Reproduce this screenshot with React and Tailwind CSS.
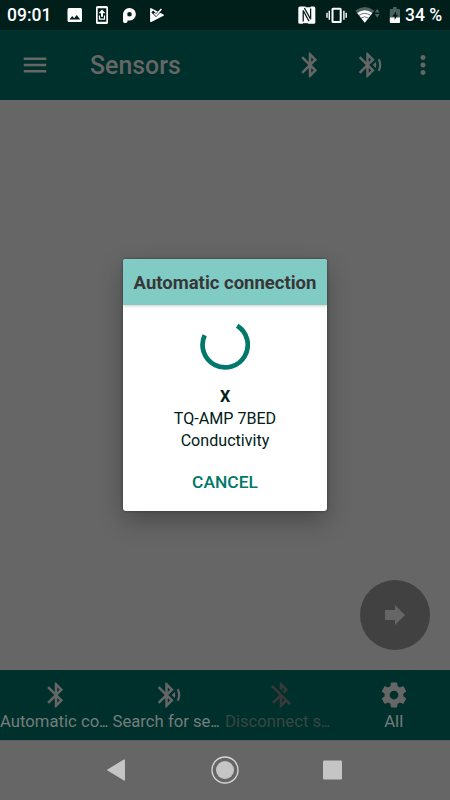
const BT =
  'M17.71 7.71L12 2h-1v7.59L6.41 5 5 6.41 10.59 12 5 17.59 6.41 19 11 14.41V22h1l5.71-5.71-4.3-4.29 4.3-4.29zM13 5.83l1.88 1.88L13 9.59V5.83zm1.88 10.46L13 18.17v-3.76l1.88 1.88z';
const BT_SEARCH =
  'M14.24 12.01l2.32 2.32c.28-.72.44-1.51.44-2.33 0-.82-.16-1.59-.43-2.31l-2.33 2.32zm5.29-5.3l-1.26 1.26c.63 1.21.98 2.57.98 4.02s-.36 2.82-.98 4.02l1.2 1.2c.97-1.54 1.54-3.36 1.54-5.31-.01-1.89-.55-3.67-1.48-5.19zm-3.82 1L10 2H9v7.59L4.41 5 3 6.41 8.59 12 3 17.59 4.41 19 9 14.41V22h1l5.71-5.71-4.3-4.29 4.3-4.29zM11 5.83l1.88 1.88L11 9.59V5.83zm1.88 10.46L11 18.17v-3.76l1.88 1.88z';
const BT_OFF =
  'M13 5.83l1.88 1.88-1.6 1.6 1.41 1.41 3.02-3.02L12 2h-1v5.03l2 2v-3.2zM5.41 4L4 5.41 10.59 12 5 17.59 6.41 19 11 14.41V22h1l4.29-4.29 2.3 2.29L20 18.59 5.41 4zM13 18.17v-3.76l1.88 1.88L13 18.17z';
const GEAR =
  'M19.43 12.98c.04-.32.07-.64.07-.98s-.03-.66-.07-.98l2.11-1.65c.19-.15.24-.42.12-.64l-2-3.46c-.12-.22-.39-.3-.61-.22l-2.49 1c-.52-.4-1.08-.73-1.69-.98l-.38-2.65C14.46 2.18 14.25 2 14 2h-4c-.25 0-.46.18-.49.42l-.38 2.65c-.61.25-1.17.59-1.69.98l-2.49-1c-.23-.09-.49 0-.61.22l-2 3.46c-.13.22-.07.49.12.64l2.11 1.65c-.04.32-.07.65-.07.98s.03.66.07.98l-2.11 1.65c-.19.15-.24.42-.12.64l2 3.46c.12.22.39.3.61.22l2.49-1c.52.4 1.08.73 1.69.98l.38 2.65c.03.24.24.42.49.42h4c.25 0 .46-.18.49-.42l.38-2.65c.61-.25 1.17-.59 1.69-.98l2.49 1c.23.09.49 0 .61-.22l2-3.46c.12-.22.07-.49-.12-.64l-2.11-1.65zM12 15.5c-1.93 0-3.5-1.57-3.5-3.5s1.57-3.5 3.5-3.5 3.5 1.57 3.5 3.5-1.57 3.5-3.5 3.5z';
const MENU = 'M3 18h18v-2H3v2zm0-5h18v-2H3v2zm0-7v2h18V6H3z';
const MORE =
  'M12 8c1.1 0 2-.9 2-2s-.9-2-2-2-2 .9-2 2 .9 2 2 2zm0 2c-1.1 0-2 .9-2 2s.9 2 2 2 2-.9 2-2-.9-2-2-2zm0 6c-1.1 0-2 .9-2 2s.9 2 2 2 2-.9 2-2-.9-2-2-2z';

function Icon({ d, className = '' }) {
  return (
    <svg viewBox="0 0 24 24" className={`size-[30px] shrink-0 ${className}`} fill="currentColor">
      <path d={d} />
    </svg>
  );
}

function StatusBar() {
  return (
    <header className="flex h-[30px] items-center bg-[#001e1a] pl-[7px] pr-2 text-white">
      <span className="w-[60px] text-[17.5px] font-medium leading-[32px]">09:01</span>
      <svg className="h-[30px] w-[100px]" viewBox="67 0 100 30" fill="currentColor">
        <path
          fillRule="evenodd"
          d="M69 8h11.5a1.5 1.5 0 0 1 1.5 1.5v11a1.5 1.5 0 0 1-1.5 1.5H69a1.5 1.5 0 0 1-1.5-1.5v-11A1.5 1.5 0 0 1 69 8zM69.5 19.5h10.7l-3.5-4.6-2.6 3.3-1.9-2.2z"
        />
        <path
          fillRule="evenodd"
          d="M97.5 6h9a1.5 1.5 0 0 1 1.500 1.500v15a1.500 1.500 0 0 1-1.500 1.500h-9a1.500 1.500 0 0 1-1.500-1.500v-15A1.500 1.500 0 0 1 97.500 6zM97.700 8.300v13.400h8.600V8.300z"
        />
        <path d="M102 9.600l3.500 3.700h-2.500v3.500h-2v-3.500h-2.500z" />
        <path d="M99.500 15.500v3.700h5v-3.700" fill="none" stroke="currentColor" strokeWidth="1.200" />
        <path
          fillRule="evenodd"
          d="M123 14.500a6.300 6.300 0 0 1 6.300-6.500 6.200 6.200 0 1 1 .6 12.500H127.500v.7a1.700 1.700 0 0 1-1.700 1.700h-1.100a1.700 1.700 0 0 1-1.700-1.700zM129.500 12a2.300 2.300 0 1 0 0 4.600 2.300 2.300 0 0 0 0-4.600z"
        />
        <path d="M151.300 8.200l12.200 6.200a.8.800 0 0 1 0 1.400l-12.200 6.200a.8.800 0 0 1-1.200-.7V9a.8.800 0 0 1 1.200-.8z" />
        <path d="M152.300 11.500l3.700 3.700 6-6" fill="none" stroke="#001e1a" strokeWidth="2.600" />
        <path d="M154.200 13.200l2 1.900 5.200-6.100" fill="none" stroke="currentColor" strokeWidth="1.500" />
      </svg>
      <svg className="ml-auto h-[30px] w-[104px] shrink-0" viewBox="297 0 104 30" fill="currentColor">
        <rect x="298.300" y="6.500" width="17" height="17.300" rx="1.500" />
        <path d="M303.200 21.500V10.500l5.800 10.800M310.600 8.500v10.800L304.400 8" fill="none" stroke="#001e1a" strokeWidth="1.300" />
        <path d="M303 23.900h5M305.600 6.500h5" stroke="#001e1a" strokeWidth="1.400" />
        <rect x="332.500" y="8.700" width="8.200" height="13.400" rx=".6" fill="none" stroke="currentColor" strokeWidth="2" />
        <path d="M329.300 10.800v9M327 12.800v5M343.900 10.800v9M346.200 12.800v5" stroke="currentColor" strokeWidth="1.400" />
        <path d="M364.800 22.800L355.300 10.700q9.500-7.200 19 0z" fill="#4d625f" />
        <path d="M364.800 22.800L357.200 13q7.600-5.300 15.200 0z" />
        <path d="M359 15.400q5.800-4 11.600 0M361 18.100q3.800-2.600 7.600 0" fill="none" stroke="#43605a" strokeWidth=".8" />
        <path d="M374.800 12.400l2.400-3.700 2.400 3.700zM374.800 14.100l2.400 3.700 2.400-3.700z" fill="#4d625f" />
        <path d="M393 7h3.600v2h2.400a1 1 0 0 1 1 1v8h-10.200v-8a1 1 0 0 1 1-1h2.200z" fill="#4d625f" />
        <path d="M389.800 17.600H400v4.400a1 1 0 0 1-1 1h-8.200a1 1 0 0 1-1-1z" />
        <path d="M396.200 11l-4 5.400h2.400V20l3.400-5.200h-2z" fill="#001e1a" />
      </svg>
      <span className="w-[41px] shrink-0 whitespace-nowrap pl-1 text-[17.500px] font-medium leading-[32px]">34 %</span>
    </header>
  );
}

function NavItem({ d, label, clipped = false, className = 'text-[#747d7b]', iconClass = 'text-[#666]' }) {
  return (
    <button className="flex min-w-0 flex-col items-center pt-[10px]">
      <Icon d={d} className={iconClass} />
      <span className={`whitespace-nowrap text-[16.7px] leading-6 ${clipped ? 'w-full text-left' : ''} ${className}`}>
        {label}
        {clipped && <span className="text-[12px] font-bold leading-none">…</span>}
      </span>
    </button>
  );
}

function Dialog() {
  return (
    <div className="absolute left-[123px] top-[259px] flex h-[252px] w-[204px] flex-col items-center overflow-hidden rounded-[3px] bg-white shadow-[0_10px_24px_rgba(0,0,0,0.28),0_0_3px_rgba(0,0,0,0.4)]">
      <h2 className="h-[46px] w-full shrink-0 whitespace-nowrap bg-[#80cbc4] text-center text-[18.5px] font-bold leading-[49px] text-[#373737] shadow-[0_1px_3px_rgba(0,0,0,0.2)]">
        Automatic connection
      </h2>
      <svg className="mt-[15px] size-[50px] shrink-0" viewBox="0 0 50 50" fill="none">
        <path d="M37.200 5.700A22.600 22.600 0 1 1 4.700 15.200" stroke="#00796b" strokeWidth="4.700" />
      </svg>
      <div className="mt-[16px] text-center text-[16.1px] leading-[22px] text-[#002018]">
        <p className="font-bold">X</p>
        <p>TQ-AMP 7BED</p>
        <p>Conductivity</p>
      </div>
      <button className="mt-[18px] text-[17.400px] font-medium leading-6 text-[#00796b]">CANCEL</button>
    </div>
  );
}

export default function App() {
  return (
    <div className="relative flex h-[800px] w-[450px] flex-col overflow-hidden bg-[#666] font-['Roboto',sans-serif]">
      <StatusBar />
      <div className="flex h-[70px] items-center bg-[#00302c] pl-5 text-[#666]">
        <Icon d={MENU} />
        <h1 className="ml-10 pt-[2px] text-[24.9px] font-medium leading-[70px]">Sensors</h1>
        <div className="ml-auto flex items-center pr-[12px]">
          <Icon d={BT} />
          <Icon d={BT_SEARCH} className="ml-[30px]" />
          <Icon d={MORE} className="ml-[23px]" />
        </div>
      </div>
      <main className="flex flex-1 items-end justify-end pb-5 pr-5">
        <button className="flex size-[70px] items-center justify-center rounded-full bg-[#414141]">
          <svg className="size-5" viewBox="0 0 20 20" fill="#666">
            <path d="M0 5h10V0l10 10-10 10v-5H0z" />
          </svg>
        </button>
      </main>
      <nav className="grid h-[70px] grid-cols-4 bg-[#00302c]">
        <NavItem d={BT} label="Automatic co" clipped />
        <NavItem d={BT_SEARCH} label="Search for se" clipped />
        <NavItem d={BT_OFF} label="Disconnect s" clipped className="text-[#394643]" iconClass="text-[#393939]" />
        <NavItem d={GEAR} label="All" />
      </nav>
      <footer className="h-[60px] border-t border-[#5e5e5e]">
        <svg className="h-[59px] w-[450px]" viewBox="0 741 450 59" fill="#c5c5c5">
          <path d="M124.300 760v20L107.800 770z" stroke="#c5c5c5" strokeWidth="1.300" strokeLinejoin="round" />
          <circle cx="225" cy="770" r="13" fill="none" stroke="#d8d8d8" strokeWidth="1.300" />
          <circle cx="225" cy="770" r="9" />
          <rect x="323" y="760.500" width="19" height="19" rx="1.200" />
        </svg>
      </footer>
      <Dialog />
    </div>
  );
}
